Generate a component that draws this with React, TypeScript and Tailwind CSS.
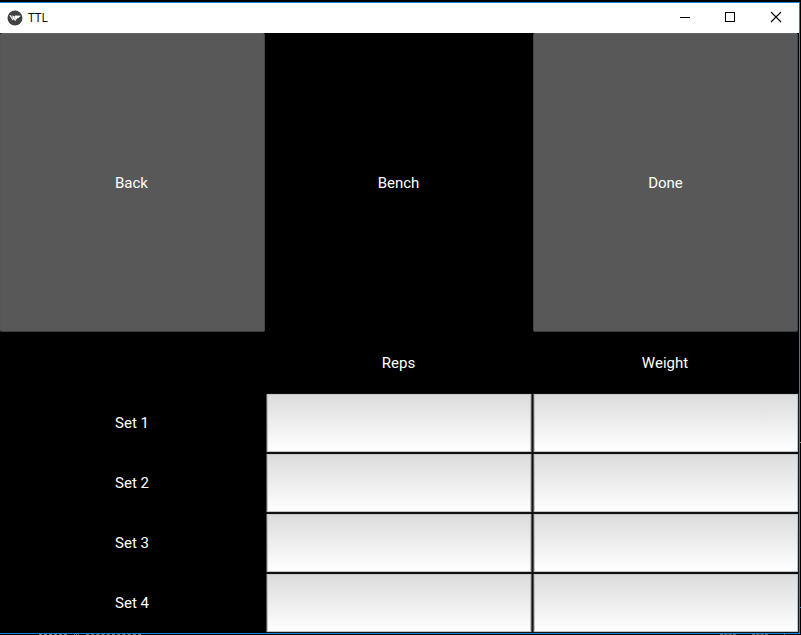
import React from "react";

function Titlebar() {
  return (
    <header className="flex h-[30px] items-center bg-white">
      <svg className="ml-[7px] h-4 w-4" viewBox="0 0 16 16">
        <circle cx="8" cy="8" r="7.5" fill="#414244" />
        <path d="M2.3 5.3 4.1 5.2 5.1 7.6 5.7 5.3 7.3 6.8 8.1 5.6 13.9 5.7 11.4 7.9 10.2 8.2 8.1 11.2 6.8 8.9 5.7 10.4Z" fill="#fff" />
        <path d="M4.1 5.2 5.8 9.2M7.3 6.8 8.2 9.5" stroke="#77787a" strokeWidth=".5" fill="none" />
      </svg>
      <span className="ml-[5px] font-['Open_Sans',sans-serif] text-[12px] leading-4 tracking-[0.1px] text-black">TTL</span>
      <div className="ml-auto flex items-center">
        <svg className="h-[30px] w-[45px]" viewBox="0 0 45 30" shapeRendering="crispEdges">
          <path d="M18 14.5h10" stroke="#000" />
        </svg>
        <svg className="h-[30px] w-[45px]" viewBox="0 0 45 30" shapeRendering="crispEdges">
          <rect x="18.5" y="9.5" width="9" height="9" fill="none" stroke="#000" />
        </svg>
        <svg className="h-[30px] w-[47px]" viewBox="0 0 47 30">
          <path d="m19 9 10 10M29 9 19 19" stroke="#000" strokeWidth="1.1" />
        </svg>
      </div>
    </header>
  );
}

function Label({ children }: { children?: string }) {
  return <div className="flex items-center justify-center pr-px">{children}</div>;
}

function ActionButton({ children }: { children: string }) {
  return (
    <button className="flex items-center justify-center rounded-[2px] border border-[#444] border-b-[#3c3c3c] border-t-[#636363] bg-[#585858] pr-[2px] pt-px first:border-l-[#555] last:pr-0">
      {children}
    </button>
  );
}

function Field({ label }: { label: string }) {
  return (
    <div className="group flex bg-[#111] pb-px pt-px">
      <div className="w-full border-x border-[#555] group-last:border-r-[#1a1a1a]">
        <input
          aria-label={label}
          className="block h-[58px] w-full rounded-none border border-[#c2c2c2] border-t-[#c6c6c6] bg-linear-to-b from-[#dcdcdc] to-white outline-none"
        />
      </div>
    </div>
  );
}

export default function App() {
  const sets = [1, 2, 3, 4];
  return (
    <div className="h-[635px] w-[801px] overflow-hidden bg-black pt-[2px] font-[Roboto,sans-serif] text-[15px] text-white">
      <div className="relative h-[632px] w-[800px] border-b border-r border-t border-[#1883d7]">
        <Titlebar />
        <main>
          <div className="grid h-[300px] grid-cols-[265px_268px_265px] pb-px">
            <ActionButton>Back</ActionButton>
            <div className="flex items-center justify-center pr-px pt-px">Bench</div>
            <ActionButton>Done</ActionButton>
          </div>
          <div className="grid h-[60px] grid-cols-[266px_266px_267px]">
            <Label />
            <Label>Reps</Label>
            <Label>Weight</Label>
          </div>
          {sets.map((n) => (
            <div key={n} className="grid h-[60px] grid-cols-[266px_533px]">
              <div className="flex items-center justify-center pr-[2px]">{`Set ${n}`}</div>
              <div className="grid grid-cols-[266px_266px] gap-x-px bg-[#111]">
                <Field label={`Set ${n} reps`} />
                <Field label={`Set ${n} weight`} />
              </div>
            </div>
          ))}
        </main>
      </div>
      <div className="flex h-px justify-between pl-[39px]">
        <div className="flex gap-[7px]">
          <div className="w-7 border-t border-dashed border-[#777]" />
          <div className="w-[5px] border-t border-dotted border-[#777]" />
          <div className="w-[55px] border-t border-dashed border-[#777]" />
        </div>
        <div className="flex gap-4 pr-4">
          <div className="w-4 border-t border-dashed border-[#666]" />
          <div className="w-4 border-t border-dashed border-[#666]" />
          <div className="w-px bg-[#666]" />
        </div>
      </div>
      <div className="absolute left-[800px] top-[442px] h-px w-px bg-[#999]" />
      <div className="absolute left-[800px] top-[607px] h-px w-px bg-[#1883d7]" />
    </div>
  );
}
